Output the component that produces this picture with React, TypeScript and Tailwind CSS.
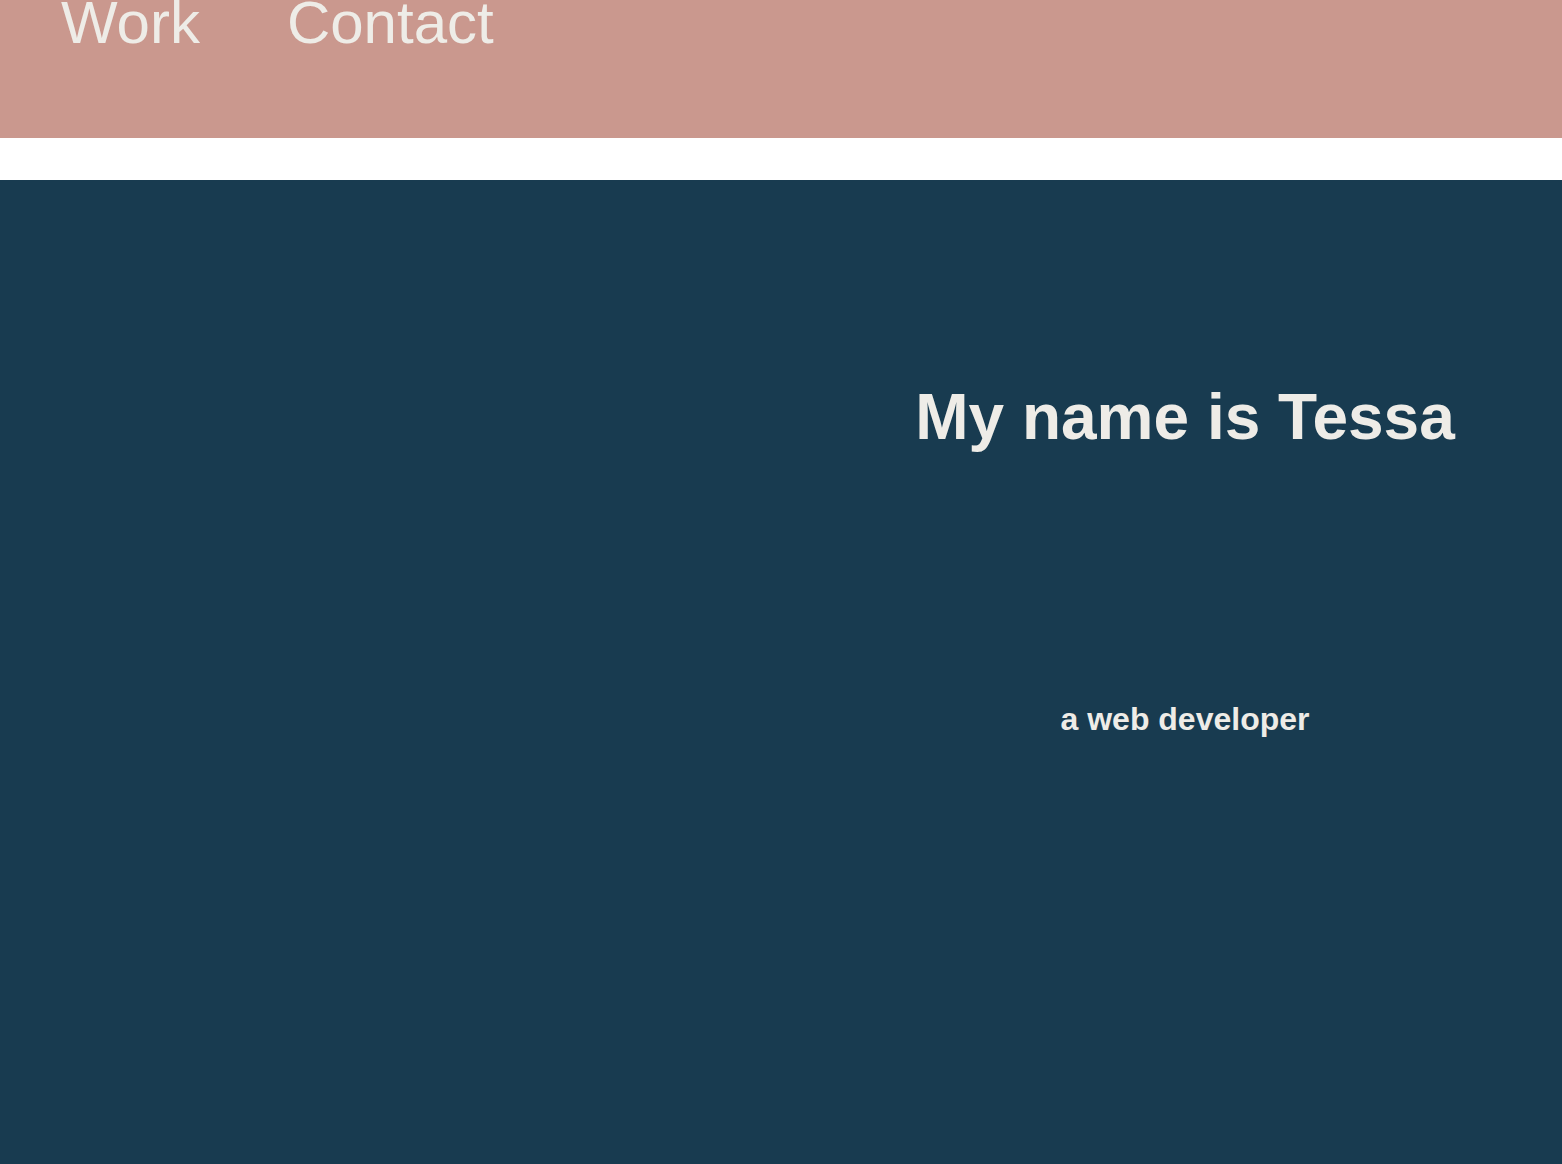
import React from 'react';

const navLinks = ['Work', 'Contact'];

const App: React.FC = () => {
  return (
    <div className="min-h-screen bg-white font-['Liberation_Sans',Arial,sans-serif] text-[#eeece7]">
      <header className="h-[138px] bg-[#ca988e] overflow-hidden">
        <nav className="-mt-[7px] pl-[61px]">
          <ul className="flex gap-[87px] text-[60px] leading-none">
            {navLinks.map(link => (
              <li key={link}>
                <a href="#">{link}</a>
              </li>
            ))}
          </ul>
        </nav>
      </header>

      <section className="mt-[42px] min-h-[984px] bg-[#183b50] grid grid-cols-[808px_1fr]">
        <div />
        <div className="flex flex-col items-center pt-[201px]">
          <h1 className="text-[64px] font-bold leading-[1.15] whitespace-nowrap">My name is Tessa</h1>
          <h2 className="mt-[246px] text-[32px] font-bold leading-[1.15]">a web developer</h2>
        </div>
      </section>
    </div>
  );
};

export default App;
